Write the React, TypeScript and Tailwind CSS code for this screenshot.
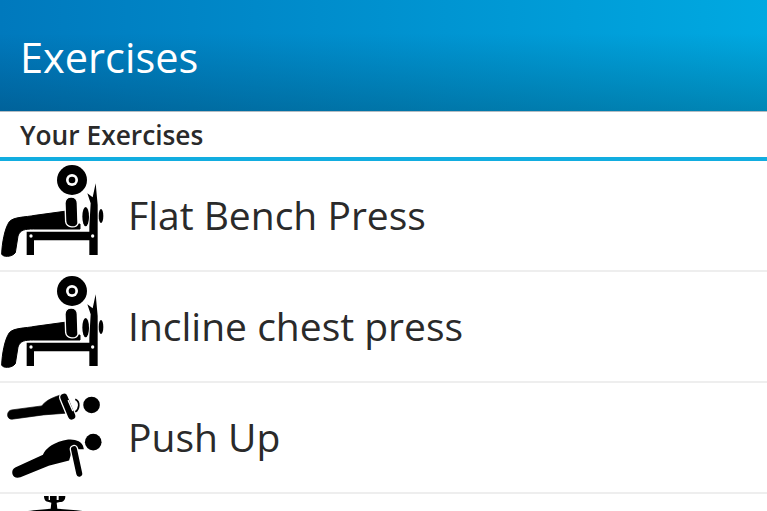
const BenchIcon = () => (
  <svg viewBox="0 3 360 330" className="h-[110px] w-[120px] shrink-0">
    <circle cx="216" cy="60" r="45" fill="#000" />
    <circle cx="216" cy="60" r="18" fill="#fff" />
    <circle cx="216" cy="60" r="10" fill="#000" />
    <path d="M5 282 C6 250 14 205 28 185 C42 170 75 172 105 166 L200 153 L206 195 L240 192 L240 207 L100 207 C76 207 60 209 54 228 L46 278 C36 292 8 292 5 282Z" fill="#000" stroke="#000" strokeWidth="3" />
    <path d="M195 130 C195 105 232 105 232 130 L234 190 C230 205 200 205 197 185Z" fill="#000" stroke="#fff" strokeWidth="4" />
    <path d="M80 215 H270 V241 H102 V285 H80Z" fill="#000" />
    <path d="M268 285 V200 L272 130 L262 100 L278 112 L287 70 L293 135 V285Z" fill="#000" />
    <ellipse cx="257" cy="170" rx="10" ry="29" fill="#000" />
    <ellipse cx="303" cy="168" rx="7" ry="21" fill="#000" />
    <circle cx="93" cy="228" r="5" fill="#fff" />
    <circle cx="278" cy="228" r="5" fill="#fff" />
  </svg>
);

const PushUpIcon = () => (
  <svg viewBox="0 0 360 331" className="h-[110px] w-[120px] shrink-0">
    <g transform="translate(0 -9)">
      <path d="M35 90 L125 78 C135 65 150 55 182 45 L196 100 L130 105 L35 118 C18 118 18 92 35 90Z" fill="#000" stroke="#000" strokeWidth="2" />
      <path d="M192 52 L215 108" stroke="#fff" strokeWidth="30" strokeLinecap="round" />
      <path d="M192 52 L215 108" stroke="#000" strokeWidth="22" strokeLinecap="round" />
      <path d="M205 62 L218 92" stroke="#fff" strokeWidth="4" strokeLinecap="round" />
      <path d="M226 58 C242 66 238 88 226 96" fill="none" stroke="#000" strokeWidth="5" />
      <circle cx="275" cy="75" r="25" fill="#000" />
      <path d="M48 265 L130 228 C140 205 160 190 205 182 C230 180 245 190 248 205 L215 205 L205 240 L145 255 L60 290 C35 295 35 272 48 265Z" fill="#000" stroke="#000" strokeWidth="6" />
      <path d="M222 208 L238 282" stroke="#fff" strokeWidth="26" strokeLinecap="round" />
      <path d="M222 208 L238 282" stroke="#000" strokeWidth="18" strokeLinecap="round" />
      <circle cx="280" cy="187" r="25" fill="#000" />
    </g>
  </svg>
);

const CablePeek = () => (
  <svg viewBox="0 0 360 54" className="h-[18px] w-[120px] shrink-0">
    <path d="M132 6 H146 V18 H150 V6 H170 V18 H176 V6 H196 C196 18 190 24 180 24 L170 26 L172 44 C200 46 240 48 262 54 H70 C92 48 130 46 152 44 L154 26 L138 22 C134 18 132 12 132 6Z" fill="#000" />
  </svg>
);

const rows = [
  { name: "Flat Bench Press", icon: <BenchIcon /> },
  { name: "Incline chest press", icon: <BenchIcon /> },
  { name: "Push Up", icon: <PushUpIcon /> },
];

export default function App() {
  return (
    <div className="h-[511px] w-[767px] overflow-hidden bg-white font-['Open_Sans',sans-serif] text-[#2a2a2a]">
      <header className="flex h-[112px] items-center border-b border-[#b4bcc2] bg-[linear-gradient(to_bottom,rgba(0,30,50,0)_30%,rgba(0,30,50,0.25)_100%),linear-gradient(to_right,#0079bd,#00a9e1)] pl-[20px] pt-[4px]">
        <h1 className="text-[41.5px] leading-none text-white">Exercises</h1>
      </header>
      <div className="flex h-[49px] items-center border-b-4 border-[#12ade0] pl-[20px] pt-[2px]">
        <h2 className="text-[26.3px] font-semibold leading-none">Your Exercises</h2>
      </div>
      <ul>
        {rows.map((row) => (
          <li key={row.name} className="flex h-[111px] items-center border-b-2 border-[#eeeeee]">
            {row.icon}
            <span className="ml-[8px] pb-[2px] text-[39px] leading-none">{row.name}</span>
          </li>
        ))}
        <li className="flex h-[18px]">
          <CablePeek />
        </li>
      </ul>
    </div>
  );
}
